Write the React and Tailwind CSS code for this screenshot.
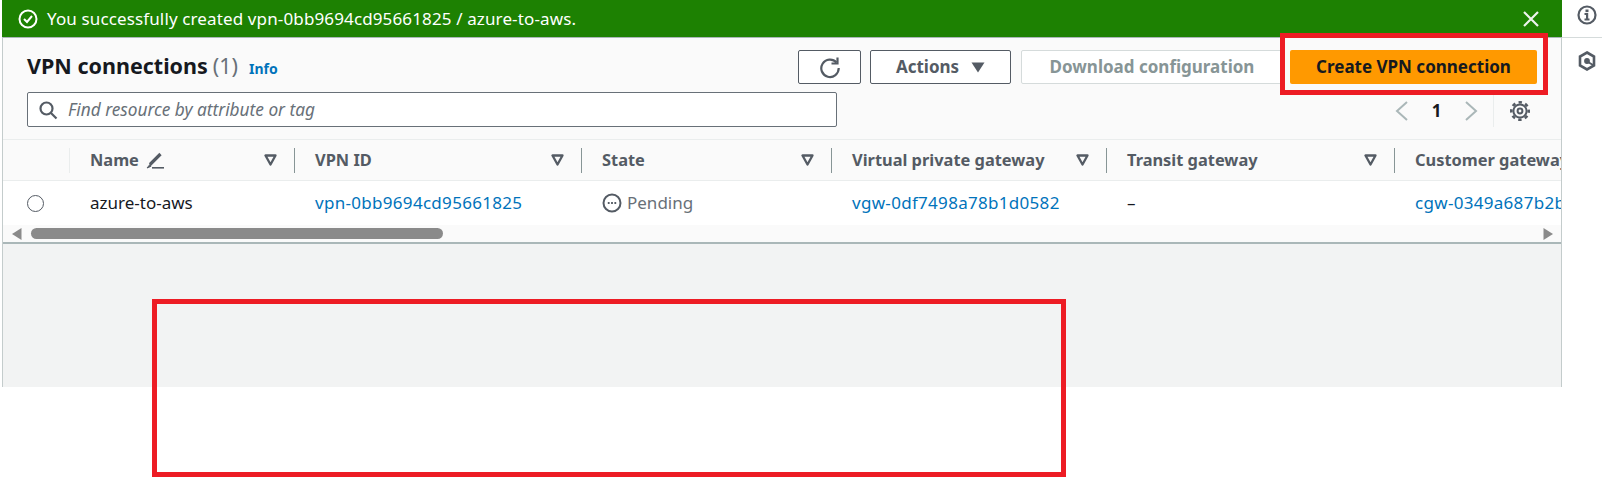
function FilterTri() {
  return (
    <svg width="13" height="12" viewBox="0 0 13 12" className="shrink-0">
      <path d="M1.5 1.5h10L6.5 10.5z" fill="none" stroke="#545b64" strokeWidth="2.3" strokeLinejoin="round" />
    </svg>
  );
}

function HeaderCell({ label, width, textPad, triRight, children }) {
  return (
    <div className="relative flex h-full shrink-0 items-center" style={{ width }}>
      <div className="flex items-center gap-[7px]" style={{ paddingLeft: textPad }}>
        <span className="whitespace-nowrap text-[16.4px] font-bold text-[#545b64]">{label}</span>
        {children}
      </div>
      {triRight !== undefined && (
        <div className="absolute top-[14px]" style={{ right: triRight }}>
          <FilterTri />
        </div>
      )}
      {triRight !== undefined && <div className="absolute right-0 top-[8px] h-[25px] w-px bg-[#879596]" />}
    </div>
  );
}

function Link({ children }) {
  return <span className="whitespace-nowrap text-[17px] tracking-[0.3px] text-[#0073bb]">{children}</span>;
}

export default function App() {
  return (
    <div className="relative h-[478px] w-[1602px] overflow-hidden bg-white font-['Noto_Sans',sans-serif]">
      <div className="flex items-start">
        <main className="ml-[2px] flex h-[387px] w-[1560px] shrink-0 flex-col overflow-hidden">
          <div className="flex h-[37px] shrink-0 items-center justify-between bg-[#1d8102] pl-[16px] pr-[22px] text-white">
            <div className="flex items-center gap-[9px]">
              <svg width="20" height="20" viewBox="0 0 20 20" fill="none" stroke="white" strokeWidth="2">
                <circle cx="10" cy="10" r="8.5" />
                <path d="M6 10l3 3 5-6" />
              </svg>
              <span className="text-[17px] tracking-[0.13px]">You successfully created vpn-0bb9694cd95661825 / azure-to-aws.</span>
            </div>
            <svg width="18" height="18" viewBox="0 0 18 18" stroke="#eef3ee" strokeWidth="2.2">
              <path d="M2 2l14 14M16 2L2 16" />
            </svg>
          </div>

          <div className="flex flex-1 flex-col border-x border-t border-x-[#c4cccc] border-t-[#aab7b8] bg-[#f2f3f3]">
            <div className="shrink-0 bg-[#fafafa]">
              <div className="flex h-[102px] border-b border-[#eaeded]">
                <div className="flex w-[834px] shrink-0 flex-col pl-[24px] pt-[12px]">
                  <div className="flex h-[32px] items-baseline">
                    <span className="text-[21.5px] font-bold text-[#16191f]">VPN connections</span>
                    <span className="ml-[5px] text-[21.5px] text-[#687078]">(1)</span>
                    <span className="ml-[11px] text-[14px] font-bold text-[#0073bb]">Info</span>
                  </div>
                  <div className="mt-[10px] flex h-[35px] items-center rounded-[2px] border border-[#687078] bg-white pl-[10px]">
                    <svg width="20" height="20" viewBox="0 0 20 20" fill="none" stroke="#545b64" strokeWidth="2.2">
                      <circle cx="8.5" cy="8.5" r="6" />
                      <path d="M13 13l5.5 5.5" />
                    </svg>
                    <span className="ml-[10px] text-[17.25px] italic text-[#687078]">Find resource by attribute or tag</span>
                  </div>
                </div>
                <div className="flex flex-1 flex-col pt-[12px]">
                  <div className="flex h-[34px] items-stretch">
                    <button className="ml-[-39px] flex w-[63px] items-center justify-center rounded-[2px] border border-[#545b64] bg-white">
                      <svg width="24" height="24" viewBox="0 0 24 24" fill="none" stroke="#545b64" strokeWidth="2.2">
                        <path d="M18.5 7.5A8.7 8.7 0 1 0 20.7 13" />
                        <path d="M19.5 2.5v6h-6" />
                      </svg>
                    </button>
                    <button className="ml-[9px] flex w-[141px] items-center justify-center gap-[12px] rounded-[2px] border border-[#545b64] bg-white text-[17px] font-bold text-[#545b64]">
                      Actions
                      <svg width="14" height="11" viewBox="0 0 14 11">
                        <path d="M0.5 0.5h13L7 10.5z" fill="#545b64" />
                      </svg>
                    </button>
                    <button className="ml-[10px] flex w-[262px] items-center justify-center rounded-[2px] border border-[#d5dbdb] bg-white text-[17px] font-bold text-[#879596]">
                      Download configuration
                    </button>
                    <button className="ml-[7px] flex w-[247px] items-center justify-center rounded-[2px] bg-[#ff9900] text-[17px] font-bold text-[#16191f]">
                      Create VPN connection
                    </button>
                  </div>
                  <div className="ml-auto mr-[30px] mt-[11px] flex h-[32px] items-center">
                    <svg width="16" height="22" viewBox="0 0 16 22" fill="none" stroke="#aab7b8" strokeWidth="2">
                      <path d="M13 2L3 11l10 9" />
                    </svg>
                    <span className="w-[53px] text-center text-[17px] font-bold text-[#16191f]">1</span>
                    <svg width="16" height="22" viewBox="0 0 16 22" fill="none" stroke="#aab7b8" strokeWidth="2">
                      <path d="M3 2l10 9-10 9" />
                    </svg>
                    <div className="ml-[14px] h-[32px] w-px bg-[#eaeded]" />
                    <svg className="ml-[15px]" width="22" height="22" viewBox="0 0 22 22" fill="none" stroke="#545b64">
                      <circle cx="11" cy="11" r="6.6" strokeWidth="2" />
                      <circle cx="11" cy="11" r="8.7" strokeWidth="2.6" strokeDasharray="3.4 3.43" strokeDashoffset="1.7" />
                      <circle cx="11" cy="11" r="2.4" strokeWidth="2" />
                    </svg>
                  </div>
                </div>
              </div>

              <div className="relative flex h-[41px] overflow-hidden border-b border-[#eaeded]">
                <div className="relative h-full w-[67px] shrink-0">
                  <div className="absolute right-0 top-[8px] h-[25px] w-px bg-[#eaeded]" />
                </div>
                <HeaderCell label="Name" width={225} textPad={20} triRight={18}>
                  <svg width="18" height="18" viewBox="0 0 18 18" fill="none" stroke="#545b64">
                    <path d="M14.5 3L4 13.5" strokeWidth="3.2" />
                    <path d="M4.2 13.2L1 17l3.8-1.6z" fill="#545b64" strokeWidth="1" />
                    <path d="M6 16.8h12" strokeWidth="1.6" />
                  </svg>
                </HeaderCell>
                <HeaderCell label="VPN ID" width={287} textPad={20} triRight={18} />
                <HeaderCell label="State" width={250} textPad={20} triRight={18} />
                <HeaderCell label="Virtual private gateway" width={275} textPad={20} triRight={18} />
                <HeaderCell label="Transit gateway" width={288} textPad={20} triRight={18} />
                <HeaderCell label="Customer gateway ID" width={220} textPad={20} />
              </div>

              <div className="flex h-[44px] overflow-hidden bg-white">
                <div className="flex w-[67px] shrink-0 items-center pl-[24px]">
                  <span className="block h-[17px] w-[17px] rounded-full border border-[#545b64] bg-white" />
                </div>
                <div className="flex w-[225px] shrink-0 items-center pl-[20px] text-[17px] text-[#16191f]">azure-to-aws</div>
                <div className="flex w-[287px] shrink-0 items-center pl-[20px]"><Link>vpn-0bb9694cd95661825</Link></div>
                <div className="flex w-[250px] shrink-0 items-center gap-[5px] pl-[20px] text-[17px] text-[#687078]">
                  <svg width="20" height="20" viewBox="0 0 20 20" fill="none">
                    <circle cx="10" cy="10" r="8.5" stroke="#545b64" strokeWidth="2" />
                    <path d="M5.8 10h1.8M9.1 10h1.8M12.4 10h1.8" stroke="#545b64" strokeWidth="2" />
                  </svg>
                  Pending
                </div>
                <div className="flex w-[275px] shrink-0 items-center pl-[20px]"><Link>vgw-0df7498a78b1d0582</Link></div>
                <div className="flex w-[288px] shrink-0 items-center pl-[20px] text-[17px] text-[#16191f]">–</div>
                <div className="flex w-[200px] shrink-0 items-center pl-[20px]"><Link>cgw-0349a687b2b6d1f34</Link></div>
              </div>

              <div className="flex h-[19px] items-center border-b-2 border-[#aab7b8] pl-[9px] pr-[8px]">
                <svg width="10" height="12" viewBox="0 0 10 12"><path d="M9.5 0v12L0 6z" fill="#8a8a8a" /></svg>
                <div className="ml-[9px] h-[11px] w-[412px] rounded-full bg-[#8a8a8a]" />
                <svg className="ml-auto" width="10" height="12" viewBox="0 0 10 12"><path d="M0.5 0v12L10 6z" fill="#8a8a8a" /></svg>
              </div>
            </div>
          </div>
        </main>

        <aside className="flex w-[40px] shrink-0 flex-col">
          <div className="flex h-[38px] w-full items-center border-b border-[#d5dbdb] pb-[7px] pl-[15px]">
            <svg width="20" height="20" viewBox="0 0 20 20" fill="none" stroke="#545b64" strokeWidth="2.2">
              <circle cx="10" cy="10" r="8.5" />
              <path d="M7.5 9h2.6v5M7.5 14.5h5" />
              <path d="M8.5 5.8h3" strokeWidth="2.6" />
            </svg>
          </div>
          <svg className="ml-[16px] mt-[13px]" width="18" height="20" viewBox="0 0 18 20" fill="none" stroke="#545b64" strokeWidth="2.6">
            <path d="M9 1.5l7 4v9l-7 4-7-4v-9z" />
            <circle cx="9" cy="10" r="2.2" fill="#545b64" strokeWidth="1.4" />
            <path d="M10 11l5 3" strokeWidth="2" />
          </svg>
        </aside>
      </div>

      <div className="absolute left-[1280px] top-[33px] h-[62px] w-[268px] border-[5px] border-[#ed1c24]" />
      <div className="absolute left-[152px] top-[299px] h-[178px] w-[914px] border-[5px] border-[#ed1c24]" />
    </div>
  );
}
